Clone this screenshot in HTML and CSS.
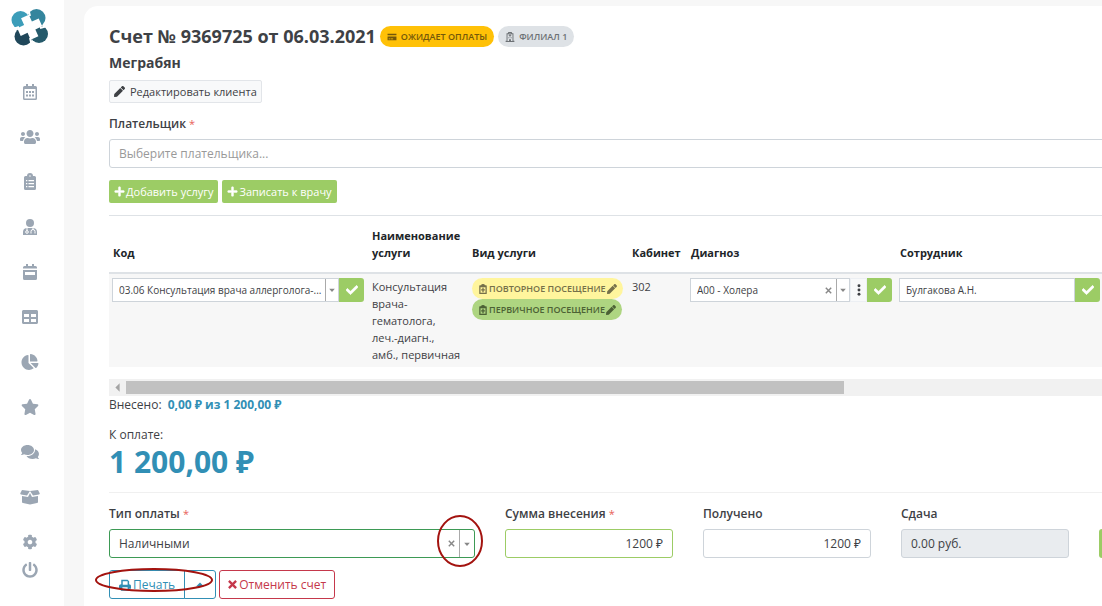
FILE: index.html
```html
<!DOCTYPE html>
<html lang="ru">
<head>
<meta charset="utf-8">
<meta name="viewport" content="width=device-width, initial-scale=1">
<title>Счет № 9369725</title>
<link rel="stylesheet" href="styles.css">
</head>
<body>
<svg class="sprite" aria-hidden="true">
  <symbol id="check" viewBox="0 0 512 512"><path d="M173.898 439.404l-166.4-166.4c-9.997-9.997-9.997-26.206 0-36.204l36.203-36.204c9.997-9.998 26.207-9.998 36.204 0L192 312.69 432.095 72.596c9.997-9.997 26.207-9.997 36.204 0l36.203 36.204c9.997 9.997 9.997 26.206 0 36.204l-294.4 294.401c-9.998 9.997-26.207 9.997-36.204-.001z" stroke="currentColor" stroke-width="24"/></symbol>
  <symbol id="pen" viewBox="0 0 512 512"><path d="M290.74 93.24l128.02 128.02-277.99 277.99-114.14 12.6C11.35 513.54-1.56 500.62.14 485.34l12.7-114.22 277.9-277.88zm207.2-19.06l-60.11-60.11c-18.75-18.75-49.16-18.75-67.91 0l-56.55 56.55 128.02 128.02 56.55-56.55c18.75-18.76 18.75-49.16 0-67.91z"/></symbol>
  <symbol id="plus" viewBox="0 0 448 512"><path d="M416 208H272V64c0-17.67-14.33-32-32-32h-32c-17.67 0-32 14.33-32 32v144H32c-17.67 0-32 14.33-32 32v32c0 17.67 14.33 32 32 32h144v144c0 17.67 14.33 32 32 32h32c17.67 0 32-14.33 32-32V304h144c17.67 0 32-14.33 32-32v-32c0-17.67-14.33-32-32-32z" stroke="currentColor" stroke-width="20"/></symbol>
  <symbol id="cross" viewBox="0 0 10 10"><path d="M1 1L9 9M9 1L1 9" fill="none" stroke="currentColor" stroke-width="2.6"/></symbol>
  <symbol id="clear" viewBox="0 0 10 10"><path d="M2 2L8 8M8 2L2 8" fill="none" stroke="currentColor" stroke-width="1.6"/></symbol>
  <symbol id="caret" viewBox="0 0 10 10"><path d="M1.500 3.500H8.500L5 7.500Z"/></symbol>
  <symbol id="clip" viewBox="0 0 16 16"><path fill-rule="evenodd" d="M5 2Q5 0 8 0T11 2H13Q14 2 14 3V15Q14 16 13 16H3Q2 16 2 15V3Q2 2 3 2ZM4 5V14H12V5ZM7 6H9V8.500H11V10.500H9V13H7V10.500H5V8.500H7Z"/></symbol>
</svg>
<div class="app">
  <aside class="sidebar">
    <a class="logo" href="#" aria-label="Главная">
      <svg viewBox="0 0 40 40">
        <circle cx="10.500" cy="12" r="9" fill="#3c9db9"/>
        <circle cx="26.500" cy="10" r="9" fill="#34859d"/>
        <circle cx="29" cy="26" r="9" fill="#255a6b"/>
        <circle cx="13.500" cy="28.500" r="9" fill="#20475a"/>
        <g transform="rotate(-24 19.700 19.300)" fill="#fff">
          <path d="M15.500 7.500H24V15H31.500V23.500H24V31H15.500V23.500H8V15H15.500Z"/>
        </g>
        <path d="M18 0L20 8M39 17.500L30 20M22 38L20 30M0 22L9 19" stroke="#fff" stroke-width="2"/>
      </svg>
    </a>
    <nav class="nav">
      <a href="#" aria-label="Календарь"><svg viewBox="0 0 18 18"><path fill-rule="evenodd" d="M5 1H7V3H11V1H13V3H14.500Q16 3 16 4.500V15.500Q16 17 14.500 17H3.500Q2 17 2 15.500V4.500Q2 3 3.500 3H5ZM3.500 6V15.500H14.500V6ZM5 8H7V10H5ZM8 8H10V10H8ZM11 8H13V10H11ZM5 11.500H7V13.500H5ZM8 11.500H10V13.500H8ZM11 11.500H13V13.500H11Z"/></svg></a>
      <a href="#" aria-label="Клиенты"><svg class="wide" viewBox="0 0 640 512"><path d="M96 224c35.300 0 64-28.700 64-64s-28.700-64-64-64-64 28.700-64 64 28.700 64 64 64zm448 0c35.300 0 64-28.700 64-64s-28.700-64-64-64-64 28.700-64 64 28.700 64 64 64zm32 32h-64c-17.600 0-33.500 7.100-45.100 18.600 40.300 22.100 68.900 62 75.100 109.400h66c17.700 0 32-14.300 32-32v-32c0-35.300-28.700-64-64-64zm-256 0c61.900 0 112-50.100 112-112S381.900 32 320 32 208 82.100 208 144s50.100 112 112 112zm76.800 32h-8.300c-20.800 10-43.900 16-68.500 16s-47.600-6-68.500-16h-8.300C179.600 288 128 339.600 128 403.200V432c0 26.500 21.500 48 48 48h288c26.500 0 48-21.500 48-48v-28.800c0-63.600-51.600-115.200-115.200-115.200zm-223.700-13.400C161.500 263.100 145.600 256 128 256H64c-35.300 0-64 28.700-64 64v32c0 17.700 14.300 32 32 32h65.900c6.300-47.400 34.900-87.300 75.200-109.400z"/></svg></a>
      <a href="#" aria-label="Задачи"><svg viewBox="0 0 18 18"><path fill-rule="evenodd" d="M6 3A3 3 0 0 1 12 3H13.500Q15 3 15 4.500V15.500Q15 17 13.500 17H4.500Q3 17 3 15.500V4.500Q3 3 4.500 3ZM8.200 2.500V3.600H9.800V2.500ZM5 7V8.300H6.300V7ZM7.500 7V8.300H13V7ZM5 10V11.300H6.300V10ZM7.500 10V11.300H13V10ZM5 13V14.300H6.300V13ZM7.500 13V14.300H13V13Z"/></svg></a>
      <a href="#" aria-label="Врачи"><svg viewBox="0 0 18 18"><circle cx="9" cy="5" r="4"/><path d="M5.500 10H12.500Q16 10.500 16 14V17H2V14Q2 10.500 5.500 10Z"/><path d="M6 10V13M12 10V12M10 15.500V13.500A2 2 0 0 1 14 13.500V15.500" fill="none" stroke="#fff"/><circle cx="6" cy="14" r="1.300" fill="none" stroke="#fff"/></svg></a>
      <a href="#" aria-label="Расписание"><svg viewBox="0 0 18 18"><path fill-rule="evenodd" d="M5 1H7V3H11V1H13V3H14.500Q16 3 16 4.500V5.500H2V4.500Q2 3 3.500 3H5ZM2 7H16V15.500Q16 17 14.500 17H3.500Q2 17 2 15.500ZM4 9V12H14V9Z"/></svg></a>
      <a href="#" aria-label="Таблицы"><svg viewBox="0 0 512 512"><path d="M464 32H48C21.490 32 0 53.490 0 80v352c0 26.510 21.490 48 48 48h416c26.510 0 48-21.490 48-48V80c0-26.510-21.490-48-48-48zM224 416H64v-96h160v96zm0-160H64v-96h160v96zm224 160H288v-96h160v96zm0-160H288v-96h160v96z"/></svg></a>
      <a href="#" aria-label="Отчеты"><svg viewBox="0 0 544 512"><path d="M527.790 288H290.500l158.030 158.030c6.040 6.040 15.980 6.530 22.190.68 38.700-36.460 65.320-85.610 73.130-140.860 1.340-9.460-6.510-17.850-16.060-17.850zm-15.830-64.800C503.720 103.740 408.260 8.280 288.800.04 279.680-.59 272 7.100 272 16.240V240h223.770c9.140 0 16.820-7.680 16.190-16.800zM224 288V50.710c0-9.550-8.390-17.400-17.840-16.060C86.990 51.490-4.100 155.600.14 280.370 4.500 408.510 114.830 513.590 243.030 511.980c50.400-.63 96.970-16.870 135.260-44.030 7.900-5.600 8.420-17.230 1.570-24.080L224 288z"/></svg></a>
      <a href="#" aria-label="Избранное"><svg viewBox="0 0 576 512"><path d="M259.300 17.800L194 150.200 47.900 171.500c-26.200 3.800-36.700 36.100-17.700 54.600l105.700 103-25 145.500c-4.500 26.300 23.200 46 46.400 33.700L288 439.600l130.700 68.700c23.200 12.200 50.900-7.400 46.400-33.700l-25-145.500 105.700-103c19-18.500 8.500-50.800-17.700-54.600L382 150.200 316.700 17.800c-11.700-23.600-45.600-23.900-57.400 0z"/></svg></a>
      <a href="#" aria-label="Сообщения"><svg viewBox="0 0 576 512"><path d="M416 192c0-88.400-93.100-160-208-160S0 103.600 0 192c0 34.300 14.100 65.900 38 92-13.400 30.200-35.500 54.200-35.800 54.500-2.200 2.300-2.800 5.700-1.500 8.700S4.800 352 8 352c36.600 0 66.900-12.300 88.700-25 32.200 15.700 70.300 25 111.300 25 114.900 0 208-71.600 208-160zm122 220c23.900-26 38-57.700 38-92 0-66.900-53.500-124.200-129.300-148.100.9 6.600 1.300 13.300 1.300 20.100 0 105.900-107.700 192-240 192-10.800 0-21.300-.8-31.700-1.900C207.800 439.600 281.800 480 368 480c41 0 79.100-9.200 111.300-25 21.800 12.700 52.100 25 88.700 25 3.200 0 6.100-1.900 7.300-4.800 1.300-2.900.7-6.300-1.500-8.700-.3-.3-22.400-24.200-35.800-54.500z"/></svg></a>
      <a href="#" aria-label="Склад"><svg class="wide" viewBox="0 0 20 16"><path d="M2 1L10 2L7 6.500L1 5.500Q0 5 .3 4.300ZM18 1L10 2L13 6.500L19 5.500Q20 5 19.700 4.300ZM2 7L8 8L10 4L12 8L18 7V13Q18 14 17 14L10 15.500L3 14Q2 14 2 13Z"/></svg></a>
      <a href="#" aria-label="Настройки"><svg viewBox="-20 -20 552 552"><path d="M487.400 315.700l-42.600-24.600c4.300-23.200 4.300-47 0-70.200l42.600-24.600c4.900-2.800 7.100-8.600 5.500-14-11.100-35.600-30-67.800-54.700-94.600-3.800-4.100-10-5.100-14.800-2.300L380.800 110c-17.900-15.400-38.500-27.300-60.800-35.100V25.800c0-5.600-3.900-10.500-9.400-11.700-36.700-8.200-74.300-7.800-109.200 0-5.500 1.200-9.400 6.100-9.400 11.700V75c-22.200 7.900-42.800 19.800-60.800 35.100L88.700 85.500c-4.900-2.800-11-1.900-14.800 2.300-24.700 26.700-43.600 58.900-54.700 94.600-1.700 5.400.6 11.200 5.500 14L67.300 221c-4.300 23.200-4.300 47 0 70.200l-42.600 24.600c-4.900 2.800-7.100 8.600-5.500 14 11.100 35.600 30 67.800 54.700 94.600 3.800 4.100 10 5.100 14.800 2.300l42.600-24.600c17.900 15.400 38.500 27.300 60.800 35.100v49.200c0 5.600 3.900 10.500 9.400 11.700 36.700 8.200 74.300 7.800 109.200 0 5.500-1.200 9.400-6.100 9.400-11.700v-49.200c22.200-7.900 42.800-19.800 60.800-35.100l42.600 24.600c4.900 2.800 11 1.900 14.800-2.300 24.700-26.700 43.600-58.900 54.700-94.600 1.500-5.500-.7-11.300-5.600-14.100zM256 336c-44.100 0-80-35.900-80-80s35.900-80 80-80 80 35.900 80 80-35.900 80-80 80z"/></svg></a>
      <a class="exit" href="#" aria-label="Выход"><svg viewBox="0 0 512 512"><path d="M400 54.100c63 45 104 118.600 104 201.900 0 136.800-110.800 247.700-247.500 248C120 504.300 8.200 393 8 256.400 7.900 173.100 48.900 99.300 111.800 54.200c11.700-8.300 28-4.800 35 7.700L162.600 90c5.900 10.500 3.100 23.800-6.600 31-41.500 30.800-68 79.600-68 134.900-.1 92.300 74.500 168.100 168 168.100 91.600 0 168.600-74.200 168-169.100-.3-51.800-24.700-101.800-68.100-134-9.700-7.200-12.400-20.500-6.500-30.900l15.800-28.100c7-12.400 23.200-16.100 34.800-7.800zM296 264V24c0-13.300-10.700-24-24-24h-32c-13.300 0-24 10.700-24 24v240c0 13.300 10.700 24 24 24h32c13.300 0 24-10.700 24-24z"/></svg></a>
    </nav>
  </aside>

  <main class="main">
    <div class="card">
      <header class="title-row">
        <h1>Счет № 9369725 от 06.03.2021</h1>
        <span class="badge badge-wait"><svg viewBox="0 0 18 14"><path fill-rule="evenodd" d="M1 1H17V4H1ZM1 6H17V13H1ZM3 9.500V11H6V9.500ZM7 9.500V11H11V9.500Z"/></svg>ОЖИДАЕТ ОПЛАТЫ</span>
        <span class="badge badge-branch"><svg viewBox="0 0 16 16"><path fill-rule="evenodd" d="M2.500 2H5V0H11V2H13.500V14H15V16H1V14H2.500ZM4 3.500V14.500H6.500V11.500H9.500V14.500H12V3.500ZM7.300 2H8.700V4.500H10V6H8.700V7.500H7.300V6H6V4.500H7.300ZM5.500 8.500H7V10H5.500ZM9 8.500H10.500V10H9Z"/></svg>ФИЛИАЛ 1</span>
      </header>
      <h2>Меграбян</h2>
      <button class="btn btn-light" type="button"><svg><use href="#pen"/></svg>Редактировать клиента</button>

      <div class="field payer">
        <label for="payer">Плательщик <span class="req">*</span></label>
        <input class="control" id="payer" type="text" placeholder="Выберите плательщика...">
      </div>
      <div class="actions">
        <button class="btn btn-green" type="button"><svg><use href="#plus"/></svg>Добавить услугу</button>
        <button class="btn btn-green" type="button"><svg><use href="#plus"/></svg>Записать к врачу</button>
      </div>

      <div class="table-wrap">
        <table>
          <colgroup><col class="c-code"><col class="c-name"><col class="c-kind"><col class="c-room"><col class="c-diag"><col class="c-staff"><col></colgroup>
          <thead>
            <tr><th>Код</th><th>Наименование услуги</th><th>Вид услуги</th><th>Кабинет</th><th>Диагноз</th><th>Сотрудник</th><th></th></tr>
          </thead>
          <tbody>
            <tr>
              <td class="edit"><div class="group">
                <div class="combo"><select aria-label="Код"><option>03.06 Консультация врача аллерголога-...</option></select><span class="arrow"><svg><use href="#caret"/></svg></span></div>
                <button class="ok" type="button" aria-label="Сохранить код"><svg><use href="#check"/></svg></button>
              </div></td>
              <td>Консультация врача-гематолога,<br>леч.-диагн.,<br>амб., первичная</td>
              <td><div class="kinds">
                <button class="badge badge-repeat" type="button"><svg><use href="#clip"/></svg>ПОВТОРНОЕ ПОСЕЩЕНИЕ<svg><use href="#pen"/></svg></button>
                <button class="badge badge-first" type="button"><svg><use href="#clip"/></svg>ПЕРВИЧНОЕ ПОСЕЩЕНИЕ<svg><use href="#pen"/></svg></button>
              </div></td>
              <td>302</td>
              <td class="edit"><div class="group">
                <div class="combo"><select aria-label="Диагноз"><option>A00 - Холера</option></select><button class="clear" type="button" aria-label="Очистить диагноз"><svg><use href="#clear"/></svg></button><span class="arrow"><svg><use href="#caret"/></svg></span></div>
                <button class="more" type="button" aria-label="Ещё"><svg viewBox="0 0 4 14"><circle cx="2" cy="2" r="1.700"/><circle cx="2" cy="7" r="1.700"/><circle cx="2" cy="12" r="1.700"/></svg></button>
                <button class="ok" type="button" aria-label="Сохранить диагноз"><svg><use href="#check"/></svg></button>
              </div></td>
              <td class="edit"><div class="group">
                <div class="combo"><select aria-label="Сотрудник"><option>Булгакова А.Н.</option></select></div>
                <button class="ok" type="button" aria-label="Сохранить сотрудника"><svg><use href="#check"/></svg></button>
              </div></td>
              <td></td>
            </tr>
          </tbody>
        </table>
      </div>
      <div class="scrollbar" aria-hidden="true"><svg viewBox="0 0 16 16"><path d="M10 4V12L6 8Z"/></svg><div class="thumb"></div></div>

      <p class="paid">Внесено: <strong>0,00 ₽ из 1 200,00 ₽</strong></p>
      <p class="due-label">К оплате:</p>
      <p class="due">1 200,00 ₽</p>

      <form class="payment">
        <div class="field pay-type">
          <label for="type">Тип оплаты <span class="req">*</span></label>
          <div class="combo combo-lg">
            <select id="type"><option>Наличными</option></select>
            <button class="clear" type="button" aria-label="Очистить тип оплаты"><svg><use href="#clear"/></svg></button><span class="arrow"><svg><use href="#caret"/></svg></span>
            <svg class="mark mark-type" viewBox="0 0 46 52"><ellipse cx="23" cy="26" rx="22" ry="25"/></svg>
          </div>
        </div>
        <div class="field"><label for="sum">Сумма внесения <span class="req">*</span></label><input class="control amount valid" id="sum" type="text" value="1200 ₽"></div>
        <div class="field"><label for="got">Получено</label><input class="control amount" id="got" type="text" value="1200 ₽"></div>
        <div class="field"><label for="change">Сдача</label><input class="control" id="change" type="text" value="0.00 руб." readonly></div>
        <button class="pay" type="button" aria-label="Внести оплату"></button>
      </form>

      <footer class="bottom">
        <div class="split">
          <button class="btn-out blue" type="button"><svg viewBox="0 0 16 16"><path fill-rule="evenodd" d="M3 1H11.500L13.500 3V7Q16 7 16 9V13H13.500V15.500H2.500V13H0V9Q0 7 3 7ZM5 3V7.500H11.500V3ZM4.500 11V13.500H11.500V11Z"/></svg>Печать</button>
          <button class="btn-out blue toggle" type="button" aria-label="Варианты печати"><svg viewBox="0 0 12 12"><path d="M2 7.500H10L6 3.500Z"/></svg></button>
          <svg class="mark mark-print" viewBox="0 0 120 26"><ellipse cx="60" cy="13" rx="58" ry="11"/></svg>
        </div>
        <button class="btn-out red" type="button"><svg><use href="#cross"/></svg>Отменить счет</button>
      </footer>
    </div>
  </main>
</div>
</body>
</html>
```
FILE: styles.css
```css
* { box-sizing: border-box; }
body {
  margin: 0;
  background: #f7f7f7;
  color: #3e4145;
  font: 12px/17px "Open Sans", "Noto Sans", sans-serif;
}
h1, h2, p { margin: 0; }
button, input, select { font: inherit; color: inherit; margin: 0; }
button { cursor: pointer; }
svg { fill: currentColor; flex: none; }
.sprite { position: absolute; width: 0; height: 0; }

.app { display: flex; min-height: 100vh; }

.sidebar {
  flex: none;
  width: 64px;
  padding-top: 8px;
  background: #fff;
  display: flex;
  flex-direction: column;
  align-items: center;
  gap: 35px;
}
.logo { display: block; width: 40px; height: 40px; margin-right: 4px; }
.logo svg { display: block; width: 40px; height: 40px; }
.nav { display: flex; flex-direction: column; align-items: center; gap: 27px; margin-right: 4px; }
.nav a { display: flex; align-items: center; height: 18px; color: #9ba6b3; }
.nav svg { width: 18px; height: 16px; }
.nav svg[viewBox="0 0 18 18"] { height: 18px; }
.nav .wide { width: 20px; }
.nav .exit { margin-top: -17px; }

.main { flex: 1; min-width: 0; overflow: hidden; padding: 6px 0 0 20px; display: flex; }
.card {
  flex: 1 0 auto;
  width: 100%;
  min-width: 1208px;
  padding: 18px 25px 6px;
  background: #fff;
  border-radius: 14px 14px 0 0;
}

.title-row { display: flex; align-items: center; gap: 4px; height: 25px; }
h1 { font-size: 18px; line-height: 25px; font-weight: 700; white-space: nowrap; }
h2 { font-size: 14px; line-height: 20px; font-weight: 700; margin: 4px 0 7px; }

.badge {
  display: inline-flex;
  align-items: center;
  gap: 4px;
  height: 21px;
  padding: 0 7px;
  border: 0;
  border-radius: 11px;
  font-size: 9px;
  font-weight: 600;
  white-space: nowrap;
}
.badge svg { width: 10px; height: 10px; }
.badge-wait { background: #ffc107; color: #73580a; }
.badge-branch { background: #dee2e6; color: #6c7074; }
.badge-repeat { background: #fff59d; color: #75704a; }
.badge-first { background: #aed581; color: #4c6135; }

.btn {
  display: inline-flex;
  align-items: center;
  height: 23px;
  border: 1px solid transparent;
  border-radius: 2px;
  font-size: 11px;
  white-space: nowrap;
}
.btn-light { gap: 5px; padding: 0 4px; background: #f8f9fa; border-color: #e2e5e9; }
.btn-light svg { width: 11px; height: 11px; }
.btn-green { gap: 1px; padding: 0 4px; background: #9ccc65; color: #fff; }
.btn-green svg { width: 11px; height: 11px; }

.field { display: flex; flex-direction: column; gap: 7px; min-width: 0; }
label { font-weight: 600; line-height: 17px; }
.req { color: #e8605a; font-size: 11px; font-weight: 400; }
.control {
  width: 100%;
  height: 29px;
  padding: 0 9px;
  border: 1px solid #ced4da;
  border-radius: 3px;
  background: #fff;
}
.control::placeholder { color: #999; opacity: 1; }
.control[readonly] { background: #e9ecef; }
.amount { text-align: right; }
.valid { border-color: #9ccc65; }
.payer { margin-top: 12px; }
.actions { display: flex; gap: 4px; padding: 12px 0; border-bottom: 1px solid #dee2e6; }

.table-wrap { overflow: hidden; }
table { width: 1812px; table-layout: fixed; border-collapse: collapse; }
.c-code { width: 259px; }
.c-name { width: 100px; }
.c-kind { width: 160px; }
.c-room { width: 59px; }
.c-diag { width: 209px; }
.c-staff { width: 208px; }
th {
  padding: 11px 4px;
  text-align: left;
  vertical-align: bottom;
  font-size: 11px;
  font-weight: 700;
  color: #212529;
  border-bottom: 2px solid #dee2e6;
}
td { padding: 4px; font-size: 11px; vertical-align: top; background: #f7f7f7; }
td.edit { padding: 4px 4px 4px 3px; }
.kinds { display: flex; flex-direction: column; align-items: flex-start; }
.kinds .badge { gap: 1px; padding: 0 6px; }

.group { display: flex; height: 24px; font-size: 10px; }
.combo { position: relative; flex: 1; min-width: 0; display: flex; border: 1px solid #ced4da; background: #fff; }
.combo select {
  appearance: none;
  flex: 1;
  min-width: 0;
  padding: 0 0 0 6px;
  border: 0;
  background: none;
}
.arrow { flex: none; width: 13px; display: flex; align-items: center; justify-content: center; border-left: 1px solid #aaa; color: #888; }
.arrow svg { width: 8px; height: 8px; }
.clear { display: flex; align-items: center; justify-content: center; width: 16px; padding: 0; border: 0; background: none; color: #888; }
.clear svg { width: 9px; height: 9px; }
.more { display: flex; align-items: center; justify-content: center; width: 17px; padding: 0; border: 1px solid #eceff3; background: #f8f9fa; }
.more svg { width: 4px; height: 12px; }
.ok { display: flex; align-items: center; justify-content: center; width: 25px; padding: 0; border: 0; border-radius: 0 3px 3px 0; background: #9ccc65; color: #fff; }
.ok svg { width: 12px; height: 12px; }

.scrollbar { display: flex; align-items: center; height: 17px; margin-top: 12px; background: #f1f1f1; color: #a3a3a3; }
.scrollbar svg { width: 17px; height: 17px; }
.thumb { width: 62%; height: 13px; background: #c1c1c1; }

.paid strong { margin-left: 3px; color: #318fb5; }
.due-label { margin-top: 13px; }
.due { padding: 2px 0 13px; font-size: 30px; line-height: 34px; font-weight: 700; color: #318fb5; border-bottom: 1px solid #f0f0f0; }

.payment { display: grid; grid-template-columns: repeat(6, minmax(0, 1fr)); column-gap: 30px; align-items: end; margin-top: 12px; }
.pay-type { grid-column: span 2; }
.combo-lg { flex: none; height: 29px; border-color: #3d9a55; border-radius: 3px; }
.combo-lg select { padding-left: 9px; }
.combo-lg .arrow { width: 15px; }
.pay { height: 29px; border: 0; border-radius: 3px; background: #9ccc65; }

.bottom { display: flex; gap: 3px; margin-top: 12px; }
.split { position: relative; display: flex; }
.btn-out { display: flex; align-items: center; gap: 2px; height: 29px; padding: 0 9px; background: #fff; border: 1px solid; border-radius: 3px; white-space: nowrap; }
.blue { color: #318fb5; border-radius: 3px 0 0 3px; }
.blue svg { width: 12px; height: 12px; }
.toggle { margin-left: -1px; border-radius: 0 3px 3px 0; }
.red { padding: 0 8px; color: #c5384b; }
.red svg { width: 9px; height: 9px; }

.mark { position: absolute; fill: none; stroke: #a3130f; stroke-width: 2; pointer-events: none; }
.mark-type { right: -9px; top: -15px; width: 46px; height: 52px; }
.mark-print { left: -15px; top: -3px; width: 120px; height: 26px; }
```
